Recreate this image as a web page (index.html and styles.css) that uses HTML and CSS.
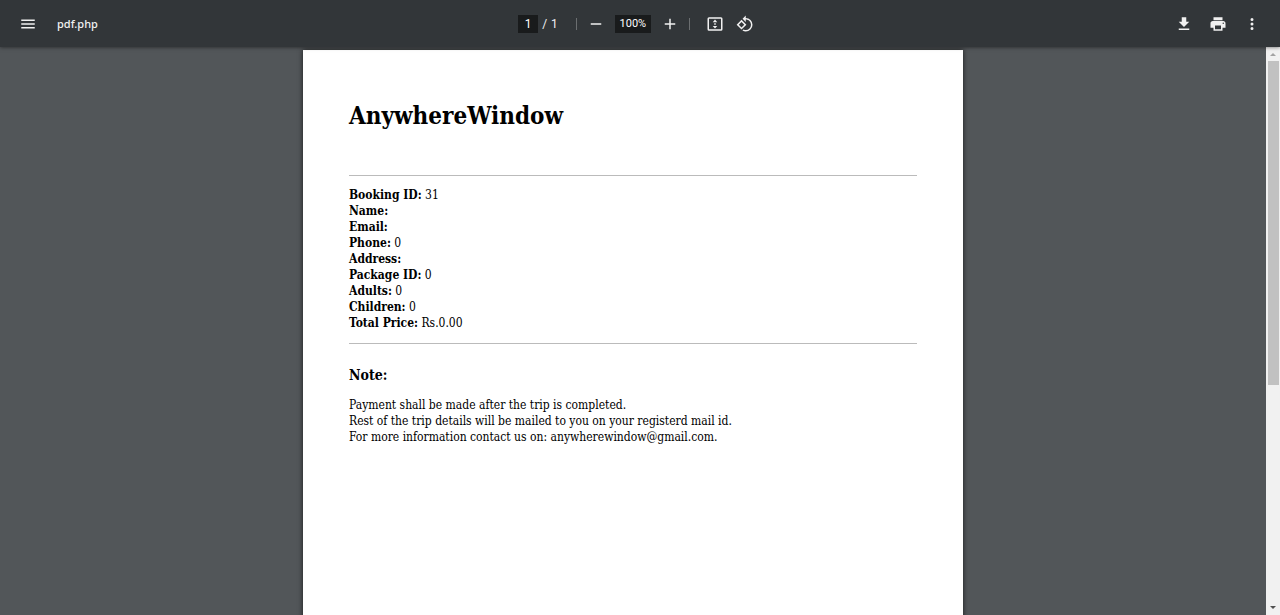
FILE: index.html
```html
<!DOCTYPE html>
<html lang="en">
<head>
<meta charset="utf-8">
<meta name="viewport" content="width=device-width, initial-scale=1">
<title>pdf.php</title>
<link rel="stylesheet" href="styles.css">
</head>
<body>
<header class="toolbar">
  <div class="toolbar-start">
    <button class="icon-button" type="button" aria-label="Menu">
      <svg width="18" height="18" viewBox="0 0 24 24"><path d="M3 18h18v-2H3v2zm0-5h18v-2H3v2zm0-7v2h18V6H3z"/></svg>
    </button>
    <span class="file-name">pdf.php</span>
  </div>
  <div class="toolbar-center">
    <div class="page-selector">
      <input class="field page-field" type="text" value="1" aria-label="Page number">
      <span class="slash">/</span>
      <span>1</span>
    </div>
    <span class="separator"></span>
    <div class="zoom-controls">
      <button class="icon-button" type="button" aria-label="Zoom out">
        <svg width="18" height="18" viewBox="0 0 24 24"><path d="M19 13H5v-2h14v2z"/></svg>
      </button>
      <input class="field zoom-field" type="text" value="100%" aria-label="Zoom level">
      <button class="icon-button" type="button" aria-label="Zoom in">
        <svg width="18" height="18" viewBox="0 0 24 24"><path d="M19 13h-6v6h-2v-6H5v-2h6V5h2v6h6v2z"/></svg>
      </button>
    </div>
    <span class="separator"></span>
    <div class="view-controls">
      <button class="icon-button" type="button" aria-label="Fit to page">
        <svg width="18" height="18" viewBox="0 0 24 24"><path d="M20 3H4a2 2 0 0 0-2 2v14a2 2 0 0 0 2 2h16a2 2 0 0 0 2-2V5a2 2 0 0 0-2-2zm0 16H4V5h16v14zM12 6 9 9.500h6L12 6zm-3 8.500 3 3.500 3-3.500H9zM11 11h2v2h-2z"/></svg>
      </button>
      <button class="icon-button" type="button" aria-label="Rotate counterclockwise">
        <svg width="18" height="18" viewBox="0 0 24 24"><path d="M7.340 6.410.860 12.900l6.490 6.480 6.490-6.480-6.500-6.490zM3.690 12.900l3.660-3.660L11 12.900l-3.660 3.660-3.650-3.660zm15.670-6.260A8.950 8.950 0 0 0 13 4V.760L8.760 5 13 9.240V6c1.790 0 3.580.680 4.950 2.050a7.007 7.007 0 0 1 0 9.900 6.973 6.973 0 0 1-7.920 1.360l-1.490 1.490C10.020 21.600 11.510 22 13 22c2.300 0 4.610-.880 6.360-2.640a8.980 8.980 0 0 0 0-12.720z"/></svg>
      </button>
    </div>
  </div>
  <div class="toolbar-end">
    <button class="icon-button" type="button" aria-label="Download">
      <svg width="18" height="18" viewBox="0 0 24 24"><path d="M19 9h-4V3H9v6H5l7 7 7-7zM5 18v2h14v-2H5z"/></svg>
    </button>
    <button class="icon-button" type="button" aria-label="Print">
      <svg width="18" height="18" viewBox="0 0 24 24"><path d="M19 8H5c-1.660 0-3 1.340-3 3v6h4v4h12v-4h4v-6c0-1.660-1.340-3-3-3zm-3 11H8v-5h8v5zm3-7c-.550 0-1-.450-1-1s.450-1 1-1 1 .450 1 1-.450 1-1 1zm-1-9H6v4h12V3z"/></svg>
    </button>
    <button class="icon-button" type="button" aria-label="More actions">
      <svg width="18" height="18" viewBox="0 0 24 24"><path d="M12 8a2 2 0 1 0 0-4 2 2 0 0 0 0 4zm0 2a2 2 0 1 0 0 4 2 2 0 0 0 0-4zm0 6a2 2 0 1 0 0 4 2 2 0 0 0 0-4z"/></svg>
    </button>
  </div>
</header>
<div class="viewer">
  <main class="canvas">
    <article class="sheet">
      <h1 class="title">AnywhereWindow</h1>
      <hr class="rule">
      <div class="details">
        <div><strong>Booking ID:</strong> 31</div>
        <div><strong>Name:</strong></div>
        <div><strong>Email:</strong></div>
        <div><strong>Phone:</strong> 0</div>
        <div><strong>Address:</strong></div>
        <div><strong>Package ID:</strong> 0</div>
        <div><strong>Adults:</strong> 0</div>
        <div><strong>Children:</strong> 0</div>
        <div><strong>Total Price:</strong> Rs.0.00</div>
      </div>
      <hr class="rule">
      <h2 class="note-title">Note:</h2>
      <p class="note">Payment shall be made after the trip is completed.<br>Rest of the trip details will be mailed to you on your registerd mail id.<br>For more information contact us on: anywherewindow@gmail.com.</p>
    </article>
  </main>
  <div class="scrollbar" aria-hidden="true">
    <svg class="arrow arrow-up" width="14" height="14" viewBox="0 0 14 14"><path d="M4 9l3-3 3 3z"/></svg>
    <div class="track"><div class="thumb"></div></div>
    <svg class="arrow" width="14" height="14" viewBox="0 0 14 14"><path d="M4 5l3 3 3-3z"/></svg>
  </div>
</div>
</body>
</html>
```

FILE: styles.css
```css
* {
  box-sizing: border-box;
}

body {
  display: flex;
  flex-direction: column;
  height: 100vh;
  margin: 0;
  overflow: hidden;
  background: #525659;
  font-family: "DejaVu Serif Condensed", "DejaVu Serif", serif;
}

.toolbar {
  display: grid;
  grid-template-columns: 1fr auto 1fr;
  align-items: center;
  flex: none;
  height: 47px;
  padding: 0 19px;
  background: #323639;
  box-shadow: 0 0 4px rgba(0, 0, 0, 0.6);
  color: #f1f1f1;
  font-family: Roboto, sans-serif;
  font-size: 12px;
  line-height: 18px;
  z-index: 1;
}

.toolbar-start,
.toolbar-center,
.toolbar-end,
.page-selector,
.zoom-controls,
.view-controls {
  display: flex;
  align-items: center;
}

.toolbar-start {
  gap: 20px;
}

.toolbar-center {
  gap: 10px;
  padding-right: 8px;
}

.toolbar-end {
  justify-content: flex-end;
  gap: 16px;
}

.page-selector {
  gap: 4px;
  padding-right: 8px;
}

.zoom-controls {
  gap: 10px;
}

.view-controls {
  gap: 12px;
  padding-left: 6px;
}

.file-name {
  font-family: "Noto Sans", sans-serif;
  font-size: 11px;
  font-weight: 500;
}

.icon-button {
  display: flex;
  padding: 0;
  border: 0;
  background: none;
  fill: #f1f1f1;
  cursor: pointer;
}

.field {
  height: 18px;
  padding: 0;
  border: 0;
  background: #191b1c;
  color: #fff;
  font: inherit;
  text-align: center;
}

.page-field {
  width: 20px;
}

.zoom-field {
  width: 36px;
  font-size: 11px;
}

.separator {
  width: 1px;
  height: 12px;
  background: #6b6e70;
}

.viewer {
  display: flex;
  flex: 1;
  min-height: 0;
}

.canvas {
  flex: 1;
  padding-top: 3px;
  overflow: hidden;
}

.sheet {
  max-width: 660px;
  min-height: 934px;
  margin: 0 auto;
  padding: 51px 46px;
  background: #fff;
  box-shadow: 0 0 5px rgba(0, 0, 0, 0.7);
  color: #000;
  font-size: 12px;
  line-height: 16px;
}

.title {
  margin: 0 0 44px;
  font-size: 24px;
  line-height: 30px;
}

.rule {
  height: 1px;
  margin: 0;
  border: 0;
  background: #bbb;
}

.details {
  padding: 11px 0 12px;
}

.note-title {
  margin: 21px 0 12px;
  font-size: 14px;
  line-height: 20px;
}

.note {
  margin: 0;
}

.scrollbar {
  display: flex;
  flex-direction: column;
  width: 14px;
  background: #f1f1f1;
}

.arrow {
  flex: none;
  fill: #505050;
}

.arrow-up {
  fill: #a3a3a3;
}

.track {
  flex: 1;
  padding: 0 1px 0 2px;
}

.thumb {
  height: 60%;
  background: #c1c1c1;
}
```
